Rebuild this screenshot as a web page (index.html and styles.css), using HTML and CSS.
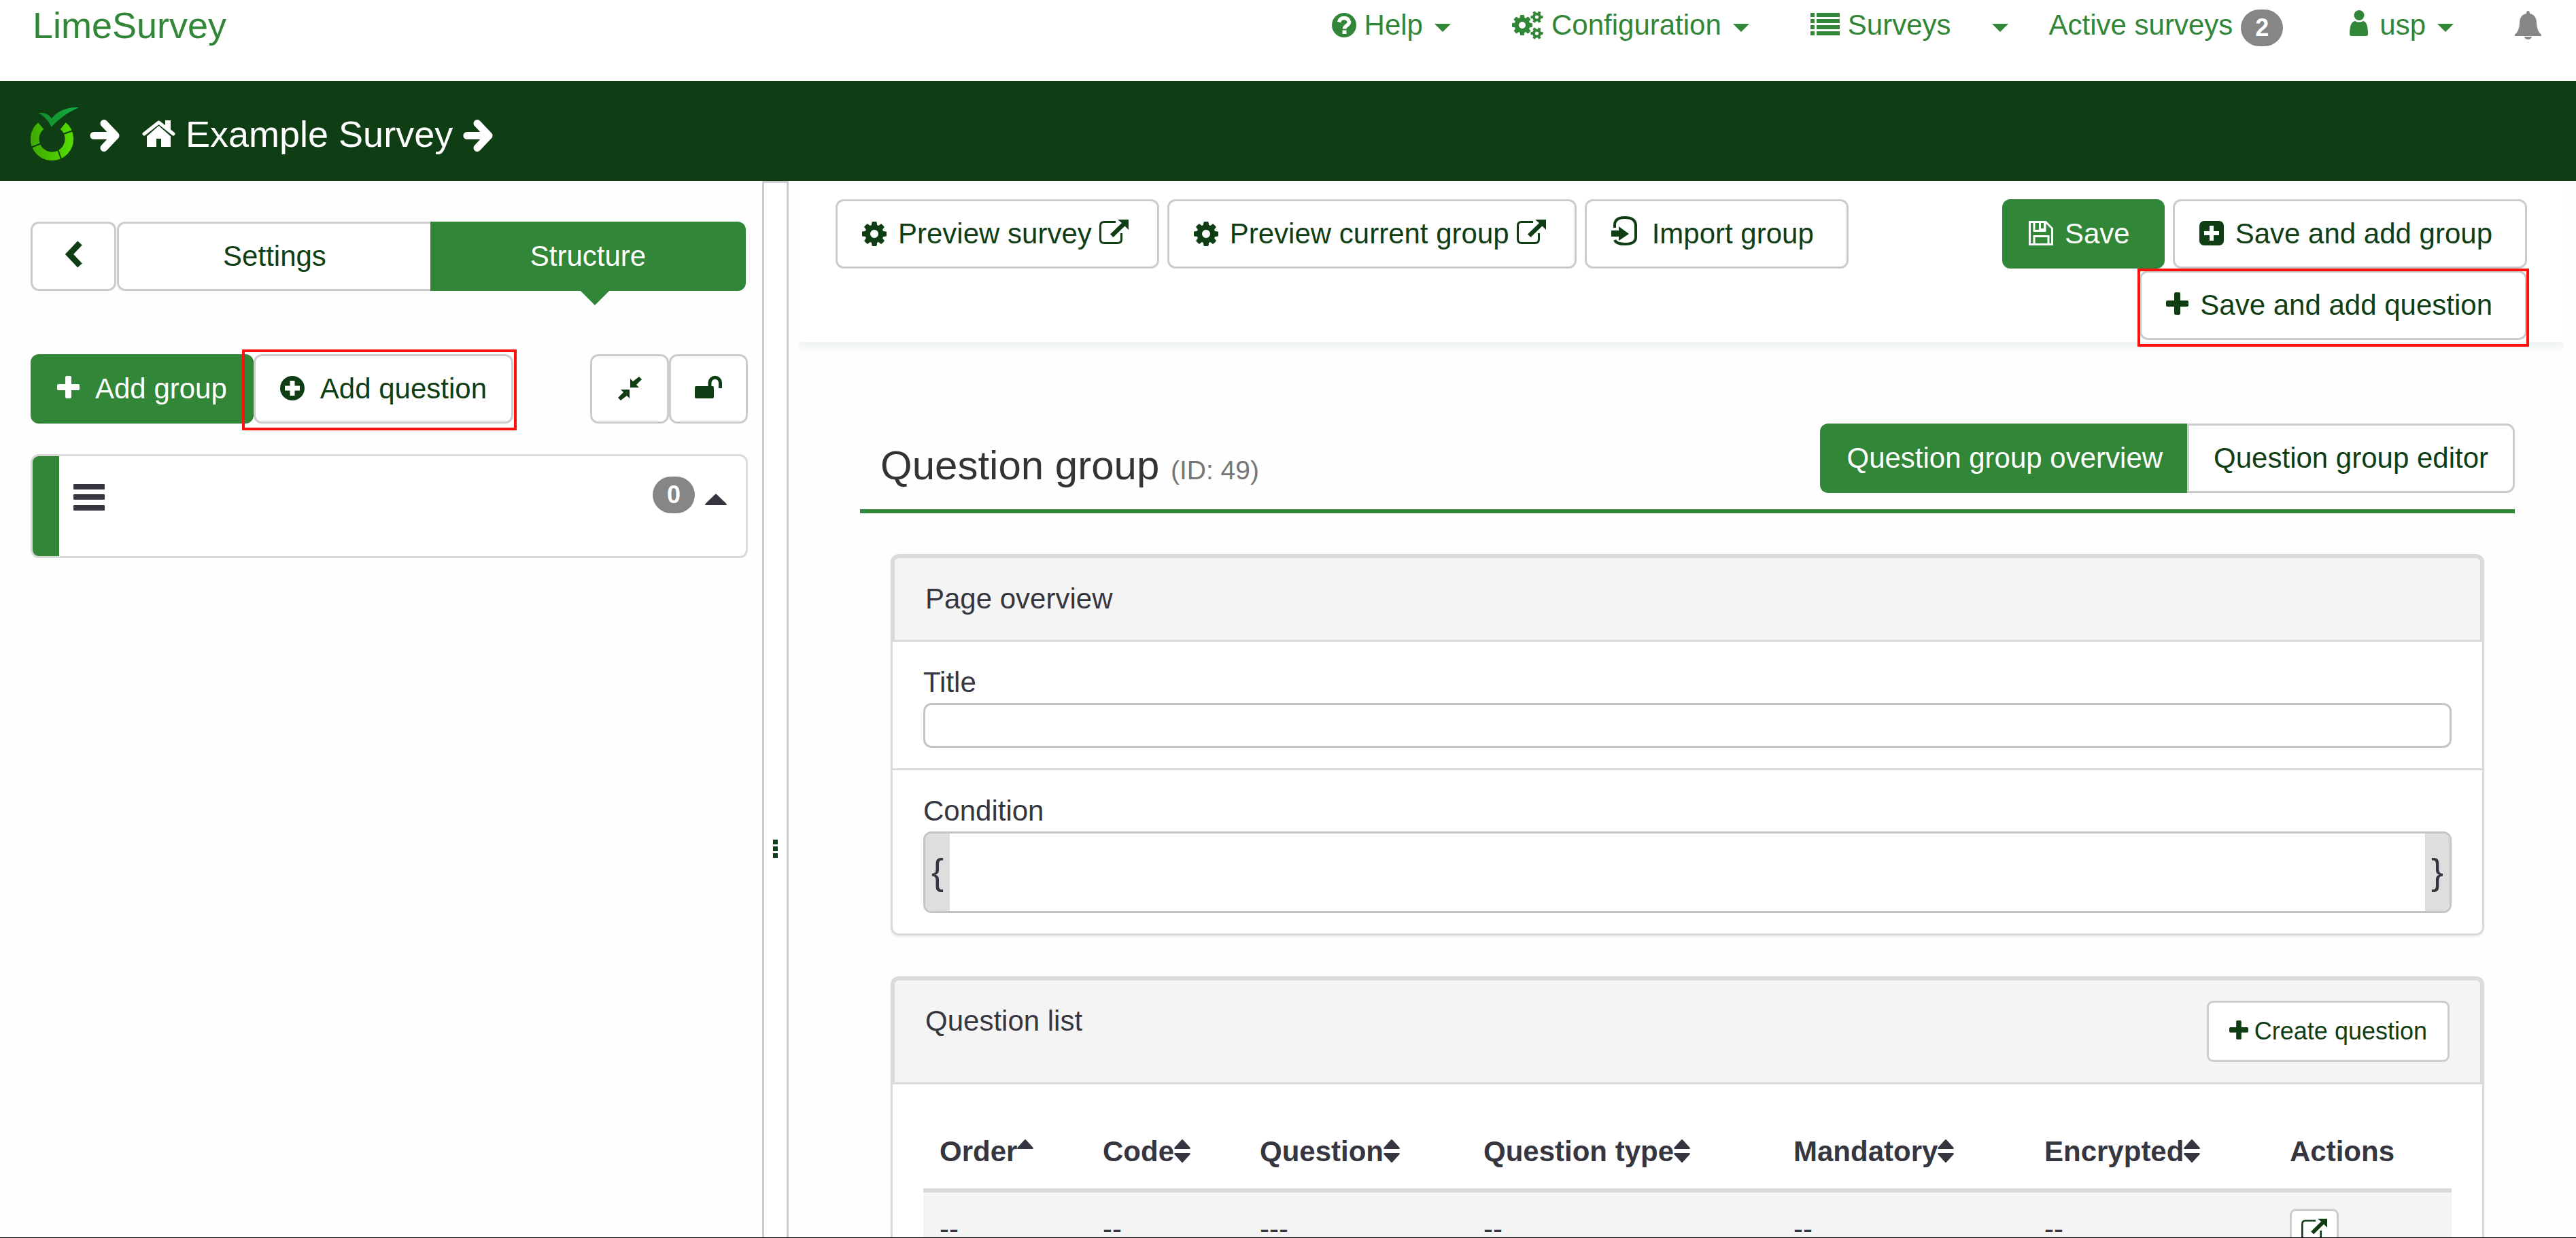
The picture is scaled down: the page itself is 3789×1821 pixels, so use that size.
FILE: index.html
```html
<!DOCTYPE html>
<html lang="en">
<head>
<meta charset="utf-8">
<meta name="viewport" content="width=device-width, initial-scale=1">
<title>LimeSurvey</title>
<link rel="stylesheet" href="styles.css">
</head>
<body>
<svg class="sprite" aria-hidden="true">
  <symbol id="cog" viewBox="128 128 1536 1536"><path d="M1152 896q0-106-75-181t-181-75-181 75-75 181 75 181 181 75 181-75 75-181zm512-109v222q0 12-8 23t-20 13l-185 28q-19 54-39 91 35 50 107 138 10 12 10 25t-9 23q-27 37-99 108t-94 71q-12 0-26-9l-138-108q-44 23-91 38-16 136-29 186-7 28-36 28h-222q-14 0-24.5-8.5t-11.5-21.5l-28-184q-49-16-90-37l-141 107q-10 9-25 9-14 0-25-11-126-114-165-168-7-10-7-23 0-12 8-23 15-21 51-66.5t54-70.5q-27-50-41-99l-183-27q-13-2-21-12.5t-8-23.5v-222q0-12 8-23t19-13l186-28q14-46 39-92-40-57-107-138-10-12-10-24 0-10 9-23 26-36 98.5-107.5t94.5-71.5q13 0 26 10l138 107q44-23 91-38 16-136 29-186 7-28 36-28h222q14 0 24.5 8.5t11.5 21.5l28 184q49 16 90 37l142-107q9-9 24-9 13 0 25 10 129 119 165 170 7 8 7 22 0 12-8 23-15 21-51 66.5t-54 70.5q26 50 41 98l183 28q13 2 21 12.5t8 23.5z"/></symbol>
  <symbol id="cog-small" viewBox="0 0 18 18"><g fill="none" stroke="currentColor"><circle cx="9" cy="9" r="4.6" stroke-width="4"/><path stroke-width="4" stroke-dasharray="3 12 3" d="M0 9H18M4.500 1.200L13.500 16.800M13.500 1.200L4.500 16.800"/></g></symbol>
  <symbol id="plus" viewBox="0 0 33 42"><path d="M14 2h5q2 0 2 2v10h10q2 0 2 2v5q0 2-2 2H21v10q0 2-2 2h-5q-2 0-2-2V23H2q-2 0-2-2v-5q0-2 2-2h10V4q0-2 2-2z"/></symbol>
  <symbol id="external" viewBox="0 0 43 42"><path fill="none" stroke="currentColor" stroke-width="3" d="M24 3.500H7Q1.500 3.500 1.500 9V29Q1.500 34.500 7 34.500H27Q32.500 34.500 32.500 29V20"/><path d="M27 0H43V15L37.500 9.500 20.500 26 16 21.500 33 5z"/></symbol>
  <symbol id="caret" viewBox="0 0 24 42"><path d="M0 19h24L12 31z"/></symbol>
  <symbol id="arrow" viewBox="0 0 44 60"><g fill="none" stroke="currentColor" stroke-width="11" stroke-linecap="round" stroke-linejoin="round"><path d="M6 32.500H36"/><path d="M21 14.500L38 32.500 21 50.500"/></g></symbol>
  <symbol id="sort" viewBox="0 0 24 42"><path d="M11 3.500q1-1 2 0L23.500 15q1 2-1 2h-21q-2 0-1-2zM11 36.500q1 1 2 0L23.500 25q1-2-1-2h-21q-2 0-1 2z"/></symbol>
  <symbol id="sort-up" viewBox="0 0 24 42"><path d="M11 3.500q1-1 2 0L23.500 15q1 2-1 2h-21q-2 0-1-2z"/></symbol>
</svg>

<header class="topbar">
  <a class="brand" href="#">LimeSurvey</a>
  <nav class="nav">
    <a class="nav-link" href="#"><svg class="icon w36" viewBox="0 0 36 42"><circle cx="18" cy="21" r="18"/><path fill="none" stroke="#fff" stroke-width="5.500" d="M10.500 16.500Q12 10.500 18 10.500T25.500 16.500Q25.500 19 22 21.500T18.500 26.500"/><path fill="#fff" d="M15.500 28.500h6v5.500h-6z"/></svg>Help<svg class="icon w24 caret"><use href="#caret"/></svg></a>
    <a class="nav-link" href="#"><svg class="icon w46" viewBox="0 0 46 42"><use href="#cog" x="0" y="6" width="30" height="30"/><use href="#cog-small" x="27" y="0" width="19" height="18"/><use href="#cog-small" x="27" y="24" width="19" height="18"/></svg>Configuration<svg class="icon w24 caret"><use href="#caret"/></svg></a>
    <a class="nav-link" href="#"><svg class="icon w43" viewBox="0 0 43 42"><path d="M0 3h6v6H0zM9 3h34v6H9zM0 12h6v6H0zM9 12h34v6H9zM0 21h6v6H0zM9 21h34v6H9zM0 30h6v6H0zM9 30h34v6H9z"/></svg>Surveys</a>
    <a class="nav-link nav-toggle" href="#" aria-label="Surveys menu"><svg class="icon w24"><use href="#caret"/></svg></a>
    <a class="nav-link" href="#">Active surveys<span class="badge nav-badge">2</span></a>
    <a class="nav-link" href="#"><svg class="icon w40" viewBox="0 0 40 42"><circle cx="22" cy="6.500" r="7.500"/><path d="M8 34Q8 16 16 15q6 3 12 0 7 1 7 19 0 3-3 3H11q-3 0-3-3z"/></svg>usp<svg class="icon w24 caret"><use href="#caret"/></svg></a>
    <a class="nav-link nav-bell" href="#" aria-label="Notifications"><svg class="icon w39" viewBox="0 0 39 42"><path d="M19.500 0q2.500 0 2.500 4 10 2 10 13 0 12 7 18v2H0v-2q7-6 7-18Q7 6 17 4q0-4 2.500-4zM14 38h11q-1 4-5.500 4T14 38z"/></svg></a>
  </nav>
</header>

<div class="crumbs">
  <svg class="logo" viewBox="0 0 71 78" role="img" aria-label="LimeSurvey logo">
    <defs>
      <linearGradient id="lime"><stop offset="0" stop-color="#3fae00"/><stop offset="1" stop-color="#55d900"/></linearGradient>
      <linearGradient id="leaf"><stop offset="0" stop-color="#118a26"/><stop offset="1" stop-color="#13b045"/></linearGradient>
    </defs>
    <path fill="none" stroke="url(#lime)" stroke-width="12.600" d="M15.200 27.100A25.300 25.300 0 1 0 47.800 27.100"/>
    <path stroke="#103e14" stroke-width="2" d="M47 39.500L64 33.500M40 62L45 76M17 52.500L0 59"/>
    <path fill="url(#leaf)" d="M11.500 8C20 7 27 10 30.700 16.300 40 5 55-1 71 .300 55 7 42 16 30.700 29 27 20 19 12 11.500 8z"/>
  </svg>
  <svg class="arrow"><use href="#arrow"/></svg>
  <a class="crumb" href="#"><svg class="icon w49" viewBox="0 0 49 42"><path fill="none" stroke="currentColor" stroke-width="5" stroke-linecap="round" stroke-linejoin="round" d="M3 21L24.500 4 46 21"/><path d="M34 1h8v15l-8-7zM7 24.500L24.500 9 42 24.500V40H28V28h-7v12H7z"/></svg>Example Survey</a>
  <svg class="arrow"><use href="#arrow"/></svg>
</div>

<div class="workspace">
  <aside class="sidebar">
    <div class="tabs">
      <button class="btn back" type="button" aria-label="Back"><svg class="icon w25" viewBox="0 0 25 42"><path fill="none" stroke="currentColor" stroke-width="9" d="M21.500 1.500L6 18 21.500 34.500"/></svg></button>
      <div class="group">
        <button class="btn tab" type="button">Settings</button>
        <button class="btn primary tab current" type="button">Structure</button>
      </div>
    </div>
    <div class="tools">
      <button class="btn primary add" type="button"><svg class="icon w33"><use href="#plus"/></svg>Add group</button>
      <div class="marked mark-add">
        <button class="btn add" type="button"><svg class="icon w36" viewBox="0 0 36 42"><circle cx="18" cy="20" r="18"/><path stroke="#fff" stroke-width="7" d="M7 20h22M18 9v22"/></svg>Add question</button>
      </div>
      <div class="tools-end">
        <button class="btn square" type="button" aria-label="Collapse all"><svg class="icon w35" viewBox="0 0 35 42"><path d="M18 6V19H31L27 15 35 7 31 3 22 10zM17 35V22H4l4 4-8 8 4 4 9-7z"/></svg></button>
        <button class="btn square" type="button" aria-label="Lock order"><svg class="icon w40" viewBox="0 0 40 42"><rect y="17" width="28" height="18" rx="2"/><path fill="none" stroke="currentColor" stroke-width="5" d="M22 18V12a7.700 7.700 0 0 1 15.500 0v8"/></svg></button>
      </div>
    </div>
    <div class="group-card">
      <svg class="icon w46" viewBox="0 0 46 42"><path d="M1 5h44q1 0 1 1v6q0 1-1 1H1q-1 0-1-1V6q0-1 1-1zM1 20h44q1 0 1 1v6q0 1-1 1H1q-1 0-1-1v-6q0-1 1-1zM1 36h44q1 0 1 1v6q0 1-1 1H1q-1 0-1-1v-6q0-1 1-1z"/></svg>
      <span class="badge card-badge">0</span>
      <svg class="icon w32" viewBox="0 0 32 42"><path d="M15 20q1-1 2 0l14.500 14q1 2-1 2h-29q-2 0-1-2z"/></svg>
    </div>
  </aside>

  <div class="splitter"><svg class="grip" viewBox="0 0 9 30"><path d="M1 1h7v7H1zM1 11h7v7H1zM1 21h7v7H1z"/></svg></div>

  <main class="main">
    <div class="toolbar">
      <div class="toolbar-start">
        <button class="btn tool has-end" type="button"><svg class="icon w36"><use href="#cog"/></svg>Preview survey<svg class="icon w43 end"><use href="#external"/></svg></button>
        <button class="btn tool has-end" type="button"><svg class="icon w36"><use href="#cog"/></svg>Preview current group<svg class="icon w43 end"><use href="#external"/></svg></button>
        <button class="btn tool" type="button"><svg class="icon w43" viewBox="0 0 43 42"><path fill="none" stroke="currentColor" stroke-width="4" d="M5 12V8Q5-3 20-3T36 8V26Q36 36 20 36 7 36 5 30"/><path d="M0 16h11v-6l15 11-15 10v-6H0z"/></svg>Import group</button>
      </div>
      <div class="toolbar-end">
        <button class="btn primary tool" type="button"><svg class="icon w36" viewBox="0 0 36 42"><path fill="none" stroke="currentColor" stroke-width="3" d="M1.500 3.500H25L34.500 13V36.500H1.500zM8 36V24.500H29V36M8 4V16.500H24V4"/><path d="M15 4h10v12H15z"/><path fill="#328637" d="M18 5h4v8h-4z"/></svg>Save</button>
        <button class="btn tool" type="button"><svg class="icon w36" viewBox="0 0 36 42"><rect y="2" width="36" height="36" rx="7"/><path stroke="#fff" stroke-width="6" d="M7 20h22M18 9v22"/></svg>Save and add group</button>
        <div class="marked mark-save">
          <button class="btn tool" type="button"><svg class="icon w33"><use href="#plus"/></svg>Save and add question</button>
        </div>
      </div>
    </div>

    <div class="content">
      <div class="page-head">
        <h1 class="title">Question group <small class="title-id">(ID: 49)</small></h1>
        <div class="group">
          <button class="btn primary" type="button">Question group overview</button>
          <button class="btn" type="button">Question group editor</button>
        </div>
      </div>

      <section class="panel">
        <h2 class="panel-head">Page overview</h2>
        <div class="field">
          <label for="title">Title</label>
          <input class="text" id="title" type="text">
        </div>
        <div class="field">
          <label for="condition">Condition</label>
          <div class="condition"><span class="brace">{</span><input class="condition-input" id="condition" type="text"><span class="brace">}</span></div>
        </div>
      </section>

      <section class="panel">
        <div class="panel-head">
          <h2 class="panel-title">Question list</h2>
          <button class="btn small" type="button"><svg class="icon w28"><use href="#plus"/></svg>Create question</button>
        </div>
        <div class="panel-body">
          <table class="questions">
            <colgroup><col class="c-order"><col class="c-code"><col class="c-question"><col class="c-type"><col class="c-mandatory"><col class="c-encrypted"><col class="c-actions"></colgroup>
            <thead>
              <tr>
                <th><span class="sort">Order<svg class="icon w24"><use href="#sort-up"/></svg></span></th>
                <th><span class="sort">Code<svg class="icon w24"><use href="#sort"/></svg></span></th>
                <th><span class="sort">Question<svg class="icon w24"><use href="#sort"/></svg></span></th>
                <th><span class="sort">Question type<svg class="icon w24"><use href="#sort"/></svg></span></th>
                <th><span class="sort">Mandatory<svg class="icon w24"><use href="#sort"/></svg></span></th>
                <th><span class="sort">Encrypted<svg class="icon w24"><use href="#sort"/></svg></span></th>
                <th><span class="sort">Actions</span></th>
              </tr>
            </thead>
            <tbody>
              <tr>
                <td>--</td><td>--</td><td>---</td><td>--</td><td>--</td><td>--</td>
                <td><button class="btn tiny" type="button" aria-label="Open question"><svg class="icon w38" viewBox="0 0 43 42"><use href="#external"/></svg></button></td>
              </tr>
            </tbody>
          </table>
        </div>
      </section>
    </div>
  </main>
</div>
</body>
</html>
```
FILE: styles.css
```css
:root {
  --green: #328637;
  --dark: #103e14;
  --ink: #363640;
  --line: #dadada;
  --btn-line: #ccc;
}

* { box-sizing: border-box; }

body {
  margin: 0;
  height: 100vh;
  display: flex;
  flex-direction: column;
  overflow: hidden;
  border-bottom: 1px solid #000;
  background: #fefefe;
  color: var(--ink);
  font: 42px/60px "Liberation Sans", Arial, sans-serif;
}

a { color: inherit; text-decoration: none; }
h1, h2 { margin: 0; font-weight: normal; }

.sprite { position: absolute; width: 0; height: 0; }

.icon {
  flex: none;
  height: 42px;
  fill: currentColor;
  overflow: visible;
}
.w24 { width: 24px; }
.w25 { width: 25px; }
.w28 { width: 28px; }
.w32 { width: 32px; }
.w33 { width: 33px; }
.w35 { width: 35px; }
.w36 { width: 36px; }
.w38 { width: 38px; }
.w39 { width: 39px; }
.w40 { width: 40px; }
.w43 { width: 43px; }
.w46 { width: 46px; }
.w49 { width: 49px; }

/* Top navigation */
.topbar {
  flex: none;
  display: flex;
  justify-content: space-between;
  padding: 7px 6px 52px 48px;
  background: #fff;
  color: var(--green);
}
.brand { font-size: 54px; }
.nav { display: flex; }
.nav-link {
  display: flex;
  align-items: center;
  gap: 12px;
  height: 60px;
  padding: 0 45px;
  white-space: nowrap;
}
.nav-toggle { padding: 0 15px; }
.nav-bell { color: #868686; }
.caret { margin-left: 5px; }

.badge {
  min-width: 62px;
  height: 54px;
  padding: 0 20px;
  border-radius: 30px;
  background: #868686;
  color: #fff;
  font-size: 36px;
  font-weight: bold;
  line-height: 54px;
  text-align: center;
}
.nav-badge { margin-top: 8px; }

/* Breadcrumb bar */
.crumbs {
  flex: none;
  display: flex;
  align-items: center;
  padding: 39px 45px 30px;
  background: var(--dark);
  color: #fff;
  font-size: 54px;
}
.logo { width: 71px; height: 78px; margin-right: 16px; }
.arrow { width: 44px; height: 60px; }
.crumb {
  display: flex;
  align-items: center;
  gap: 15px;
  margin: 0 15px 0 33px;
}

/* Buttons */
.btn {
  display: inline-flex;
  align-items: center;
  justify-content: center;
  margin: 0;
  padding: 18px 36px;
  border: 3px solid var(--btn-line);
  border-radius: 12px;
  background: #fff;
  color: var(--dark);
  font: inherit;
  white-space: nowrap;
}
.primary {
  border-color: var(--green);
  background: var(--green);
  color: #fff;
}
.add { gap: 23px; }
.tool { gap: 17px; padding-right: 48px; }
.has-end { padding-right: 42px; }
.end { margin-left: -6px; }
.small {
  gap: 9px;
  padding: 15px 30px;
  border-radius: 9px;
  font-size: 36px;
  line-height: 54px;
}
.tiny { padding: 9px 14px; border-radius: 9px; }

.group { display: flex; }
.group .btn:first-child { border-radius: 12px 0 0 12px; border-right: 0; }
.group .btn:last-child { border-radius: 0 12px 12px 0; }

/* Highlight frames drawn over the two ways to add a question */
.marked { position: relative; display: flex; }
.marked::after {
  content: "";
  position: absolute;
  border: 4px solid #ff1010;
  pointer-events: none;
}
.mark-add::after { inset: -7px -5px -10px -17px; }
.mark-save::after { inset: -3px -3px -10px -3px; }

/* Sidebar */
.workspace {
  flex: 1;
  min-height: 0;
  display: flex;
}
.sidebar {
  flex: none;
  width: 1121px;
  padding: 60px 21px 0 45px;
}
.tabs { display: flex; gap: 1px; padding-right: 3px; }
.back { width: 126px; }
.tabs .group { flex: 1; }
.tab { flex: 1; }
.current { position: relative; }
.current::after {
  content: "";
  position: absolute;
  top: 100%;
  left: 47%;
  border: 24px solid transparent;
  border-top-color: var(--green);
  border-bottom: 0;
}
.tools { display: flex; margin: 93px 0 45px; }
.tools-end { display: flex; margin-left: auto; }
.square { width: 116px; }

.group-card {
  display: flex;
  align-items: center;
  height: 153px;
  padding: 0 28px 33px 21px;
  border: 3px solid var(--line);
  border-radius: 12px;
  background: linear-gradient(var(--green), var(--green)) left / 39px 100% no-repeat #fff;
}
.group-card .icon:first-child { margin-left: 39px; }
.card-badge { margin: 0 15px 0 auto; }

.splitter {
  flex: none;
  width: 39px;
  padding-top: calc(54vh - 18px);
  border: 3px solid var(--btn-line);
  border-bottom: 0;
  background: #fff;
}
.grip {
  display: block;
  width: 9px;
  height: 30px;
  margin: 0 auto;
  fill: var(--dark);
}

/* Main column */
.main {
  flex: 1;
  min-width: 0;
  padding: 0 18px 0 15px;
}
.toolbar {
  display: flex;
  justify-content: space-between;
  padding: 27px 54px 3px;
  background: #fff;
  box-shadow: 0 6px 15px #e9efec;
  clip-path: inset(0 0 -24px 0);
}
.toolbar-start { display: flex; align-items: flex-start; gap: 12px; }
.toolbar-end {
  display: flex;
  flex-wrap: wrap;
  justify-content: flex-end;
  gap: 3px 12px;
  width: 790px;
}

.content { padding: 120px 72px 0 90px; }
.page-head {
  display: flex;
  justify-content: space-between;
  align-items: flex-end;
  padding: 0 0 24px 30px;
  border-bottom: 6px solid var(--green);
}
.title { color: #333; font-size: 60px; line-height: 80px; }
.title-id { color: #777; font-size: 39px; line-height: 1; }

.panel {
  margin: 60px 45px 0;
  border: 3px solid var(--line);
  border-radius: 12px;
  background: #fff;
  box-shadow: 0 3px 3px rgba(0, 0, 0, .05);
}
.panel-head {
  display: flex;
  justify-content: space-between;
  align-items: flex-start;
  padding: 30px 45px;
  border: 3px solid var(--line);
  border-radius: 9px 9px 0 0;
  background: #f4f4f4;
  font-size: 42px;
}
.panel-title { font-size: 42px; }
.panel-body { padding: 45px; }

.field { padding: 30px 45px; }
.field + .field { border-top: 3px solid var(--line); }
.field label { display: block; }
.text {
  display: block;
  width: 100%;
  height: 66px;
  padding: 0 18px;
  border: 3px solid #c5c5c5;
  border-radius: 12px;
  background: #fff;
  font: inherit;
}
.condition {
  display: flex;
  height: 120px;
  border: 3px solid #c5c5c5;
  border-radius: 12px;
  overflow: hidden;
}
.condition-input {
  flex: 1;
  min-width: 0;
  border: 0;
  background: #fff;
  font: inherit;
}
.brace {
  width: 36px;
  background: #dedede;
  font-size: 54px;
  line-height: 112px;
  text-align: center;
}

.questions {
  width: 100%;
  table-layout: fixed;
  border-collapse: collapse;
}
.c-order { width: 240px; }
.c-code { width: 231px; }
.c-question { width: 329px; }
.c-type { width: 456px; }
.c-mandatory { width: 369px; }
.c-encrypted { width: 361px; }
.c-actions { width: 262px; }
.questions th, .questions td {
  padding: 24px;
  text-align: left;
  vertical-align: top;
}
.questions thead { border-bottom: 6px solid var(--line); }
.questions tbody { background: #f4f4f4; }
.sort { display: flex; align-items: center; }
```
